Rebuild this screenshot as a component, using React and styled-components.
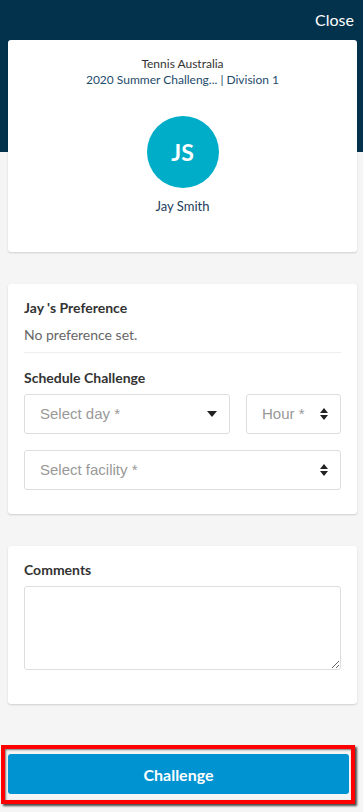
import React from 'react'
import { styled, createGlobalStyle } from 'styled-components'

const GlobalStyle = createGlobalStyle`
  html, body {
    margin: 0;
    padding: 0;
    background: #f5f5f5;
  }
  body {
    font-family: 'Lato', 'Liberation Sans', sans-serif;
    color: #333;
  }
  * {
    box-sizing: border-box;
  }
`

const Page = styled.div`
  min-height: 812px;
  background: linear-gradient(to bottom, #02324c 0, #02324c 152px, #f5f5f5 152px);
  display: flex;
  flex-direction: column;
`

const TopBar = styled.div`
  height: 40px;
  display: flex;
  justify-content: flex-end;
  align-items: center;
  padding: 0 9px 0 0;
`

const CloseButton = styled.span`
  color: #fff;
  font-size: 16px;
  line-height: 20px;
  margin-top: -1px;
`

const Card = styled.div`
  margin: 0 6px 0 8px;
  background: #fff;
  border-radius: 3px;
  box-shadow: 0 1px 2px rgba(0, 0, 0, 0.16);
  padding: ${(p) => p.$pad || '16px'};
  display: flex;
  flex-direction: column;
  & + & {
    margin-top: 32px;
  }
`

const ClubName = styled.div`
  text-align: center;
  font-size: 12px;
  line-height: 16px;
  color: #333;
`

const CompName = styled.div`
  text-align: center;
  font-size: 12px;
  line-height: 16px;
  color: #1d4b6c;
`

const Avatar = styled.div`
  width: 72px;
  height: 72px;
  border-radius: 50%;
  background: #00adc9;
  color: #fff;
  font-size: 23px;
  font-weight: 700;
  display: flex;
  align-items: center;
  justify-content: center;
  margin: 28px auto 0;
`

const PlayerName = styled.div`
  text-align: center;
  font-size: 13px;
  line-height: 16px;
  color: #1c3d5a;
  margin-top: 10px;
`

const Label = styled.div`
  font-size: 14px;
  font-weight: 700;
  line-height: 16px;
  color: #333;
  margin-top: ${(p) => p.$top || '0'};
`

const Muted = styled.div`
  font-size: 14px;
  line-height: 16px;
  color: #666;
  margin-top: 11px;
  padding-bottom: 9px;
  border-bottom: 1px solid #eee;
`

const Row = styled.div`
  display: flex;
  gap: 16px;
  margin-top: ${(p) => p.$top || '0'};
`

const SelectBox = styled.div`
  height: 40px;
  flex: ${(p) => p.$flex || '1'};
  border: 1px solid #ddd;
  border-radius: 3px;
  display: flex;
  align-items: center;
  justify-content: space-between;
  padding: 0 12px 1px 15px;
  font-family: 'Liberation Sans', Arial, sans-serif;
  font-size: 15px;
  color: #999;
`

const TextArea = styled.textarea`
  margin-top: 8px;
  height: 84px;
  width: 100%;
  border: 1px solid #ddd;
  border-radius: 3px;
  font-family: 'Lato', sans-serif;
  font-size: 13px;
  padding: 8px;
  outline: none;
`

const Footer = styled.div`
  margin-top: 41px;
  padding: 0 8px 0 1px;
`

const Highlight = styled.div`
  width: 354px;
  border: 4px solid #ff0000;
  padding: 5px 2px 6px 3px;
  box-shadow: 2px 2px 2px rgba(0, 0, 0, 0.7), inset 1px 1px 2px rgba(0, 0, 0, 0.5);
`

const PrimaryButton = styled.button`
  width: 100%;
  height: 40px;
  border: none;
  border-radius: 3px;
  background: #0093d2;
  color: #fff;
  font-family: 'Lato', sans-serif;
  font-size: 16px;
  font-weight: 700;
  display: block;
`

const Caret = () => (
  <svg width="10" height="6" viewBox="0 0 10 6">
    <path d="M0 0h10L5 6z" fill="#222" />
  </svg>
)

const Stepper = () => (
  <svg width="8" height="12" viewBox="0 0 8 12">
    <path d="M0 5h8L4 0z M0 7h8L4 12z" fill="#222" />
  </svg>
)

const App = () => {
  return (
    <>
      <GlobalStyle />
      <Page>
        <TopBar>
          <CloseButton>Close</CloseButton>
        </TopBar>

        <Card $pad="16px 16px 38px">
          <ClubName>Tennis Australia</ClubName>
          <CompName>2020 Summer Challeng... | Division 1</CompName>
          <Avatar>JS</Avatar>
          <PlayerName>Jay Smith</PlayerName>
        </Card>

        <Card $pad="16px 16px 24px">
          <Label>Jay 's Preference</Label>
          <Muted>No preference set.</Muted>
          <Label $top="17px">Schedule Challenge</Label>
          <Row $top="8px">
            <SelectBox $flex="0 0 206px">
              Select day *
              <Caret />
            </SelectBox>
            <SelectBox>
              Hour *
              <Stepper />
            </SelectBox>
          </Row>
          <Row $top="16px">
            <SelectBox>
              Select facility *
              <Stepper />
            </SelectBox>
          </Row>
        </Card>

        <Card $pad="16px 16px 34px">
          <Label>Comments</Label>
          <TextArea />
        </Card>

        <Footer>
          <Highlight>
            <PrimaryButton>Challenge</PrimaryButton>
          </Highlight>
        </Footer>
      </Page>
    </>
  )
}

export default App
